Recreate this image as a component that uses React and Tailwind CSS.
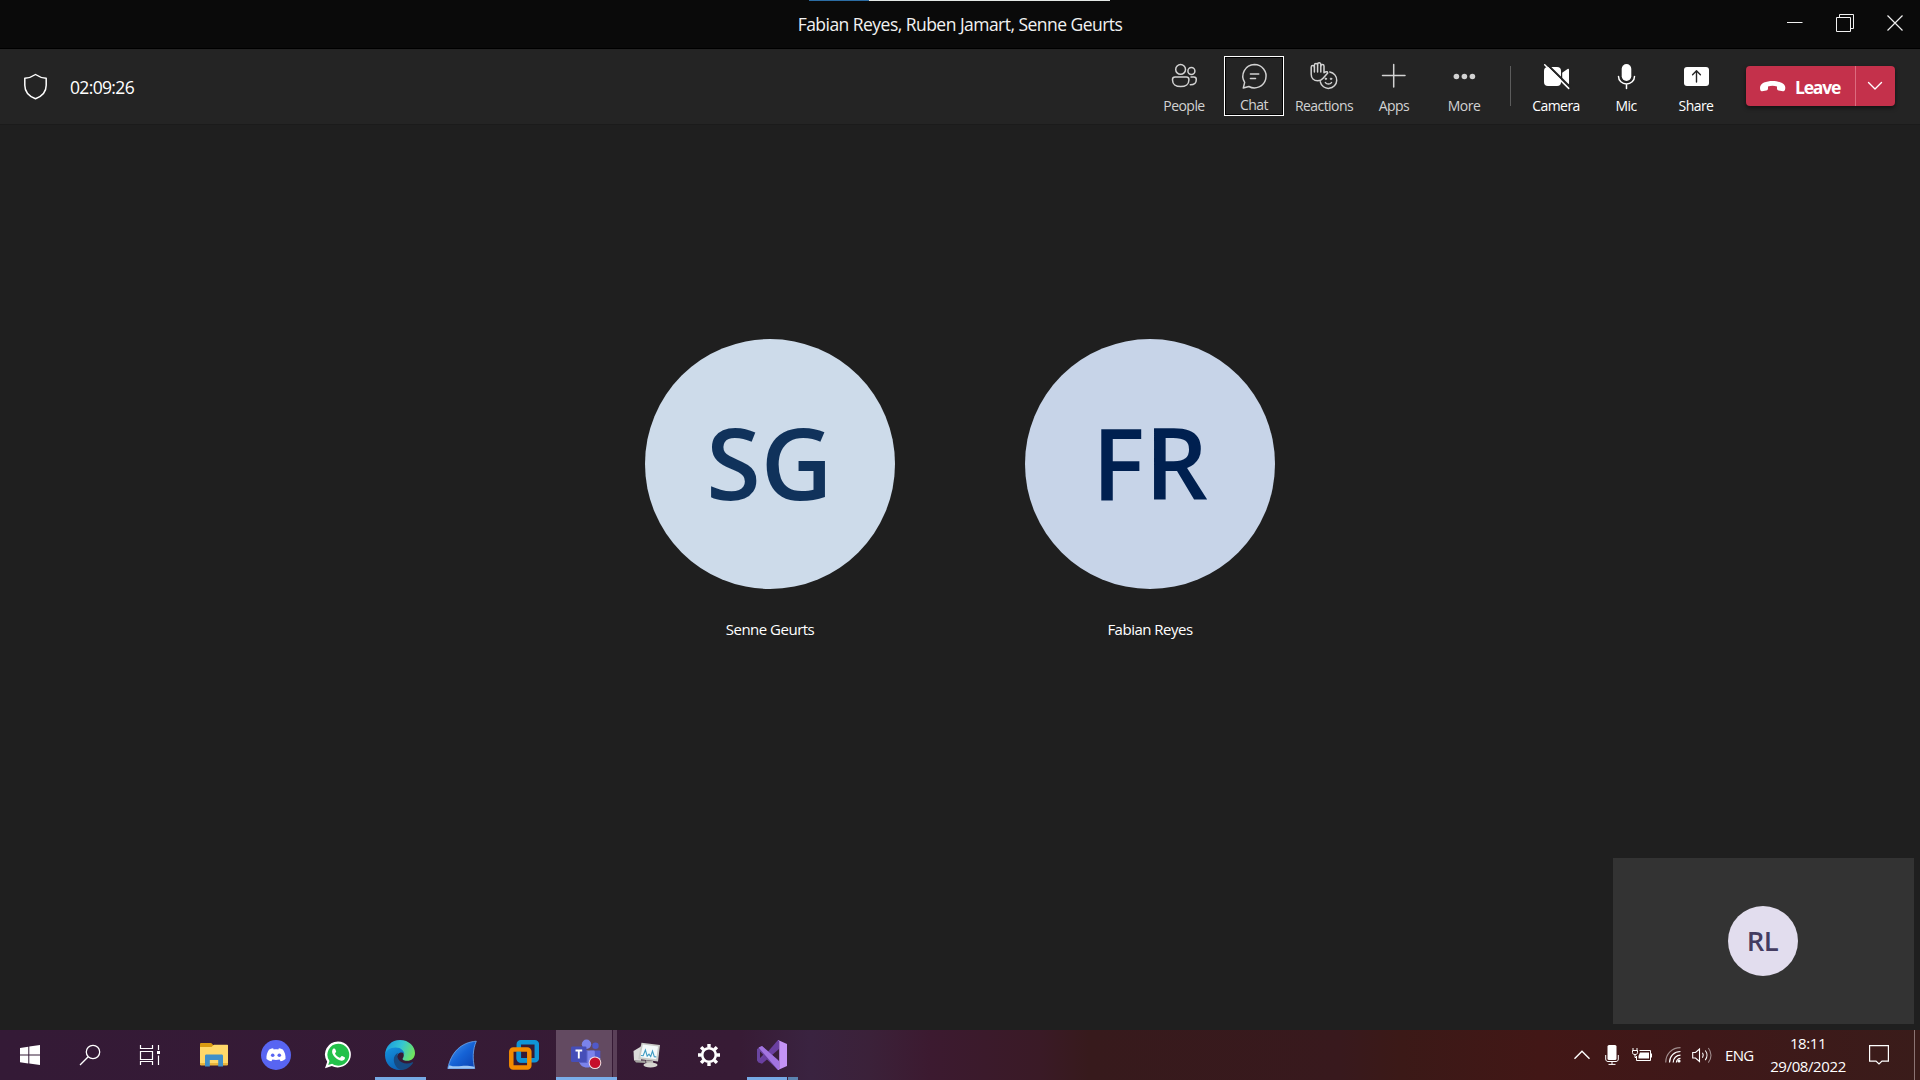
import React from "react";

const Glyph = ({ children, className = "" }) => (
  <svg
    width="40"
    height="36"
    viewBox="0 0 40 36"
    fill="none"
    stroke="currentColor"
    strokeWidth="1.5"
    strokeLinecap="round"
    strokeLinejoin="round"
    className={className}
  >
    {children}
  </svg>
);

const PeopleIcon = () => (
  <Glyph>
    <circle cx="16.6" cy="9.4" r="4.9" />
    <circle cx="27.4" cy="11" r="3.5" />
    <path d="M11 16.9h11.4a2.5 2.5 0 0 1 2.5 2.5v.6c0 4-3.3 6.6-8.2 6.6s-8.2-2.6-8.2-6.6v-.6a2.5 2.5 0 0 1 2.5-2.5z" />
    <path d="M27 16.9h2.8a2.5 2.5 0 0 1 2.5 2.5c0 3.5-2.3 5.4-6 5.4" />
  </Glyph>
);

const ChatIcon = () => (
  <Glyph>
    <path d="M20.4 4.7a12 12 0 1 1-5.7 22.56l-5.7 1.5 1.4-5.7A12 12 0 0 1 20.4 4.7z" />
    <path d="M16.3 14.3h8.6M16.3 19h5.3" />
  </Glyph>
);

const ReactionsIcon = () => (
  <Glyph>
    <path d="M7.200 7.200a1.600 1.600 0 0 1 3.200 0V5a1.600 1.600 0 0 1 3.200 0V4.300a1.600 1.600 0 0 1 3.200 0V6a1.600 1.600 0 0 1 3.200 0v6.800c1-.9 2.200-1.400 3.200-1l.5 1.200-4.600 5.200c-1.400 1.700-3.200 2.500-5.400 2.500-3.900 0-6.500-2.600-6.500-6.500z" />
    <path d="M10.400 7v5M13.600 5v7M16.800 5.500v6.500" />
    <path d="M25.800 11.900a8.300 8.300 0 1 1-9.500 9.900" />
    <path d="M21.400 22.600c1.500 2 4.600 2 6.100 0" />
    <circle cx="21.800" cy="18.800" r=".8" fill="currentColor" strokeWidth=".8" />
    <circle cx="27" cy="18.800" r=".8" fill="currentColor" strokeWidth=".8" />
  </Glyph>
);

const AppsIcon = () => (
  <Glyph>
    <path d="M19.700 4.500v22.500M8.500 15.600h22.500" />
  </Glyph>
);

const MoreIcon = () => (
  <Glyph>
    <g fill="currentColor" stroke="none">
      <circle cx="12.400" cy="16.500" r="2.800" />
      <circle cx="20.400" cy="16.500" r="2.800" />
      <circle cx="28.400" cy="16.500" r="2.800" />
    </g>
  </Glyph>
);

const CameraIcon = () => (
  <Glyph>
    <g fill="currentColor" stroke="none">
      <rect x="8" y="7" width="17" height="19" rx="4" />
      <path d="M26.200 12.800l5.400-3.800c.8-.5 1.400-.2 1.400.7v13.600c0 .9-.6 1.200-1.400.7l-5.400-3.800z" />
    </g>
    <path d="M10.500 3.700l24 23.800" stroke="#242424" strokeWidth="2.200" />
    <path d="M8.700 4.800l24 23.600" strokeWidth="1.500" />
  </Glyph>
);

const MicIcon = () => (
  <Glyph>
    <rect x="15.700" y="4" width="9.600" height="17" rx="4.800" fill="currentColor" stroke="none" />
    <path d="M12.500 16.500a8 7.500 0 0 0 16 0M20.500 24.200v4.200" />
  </Glyph>
);

const ShareIcon = () => (
  <Glyph>
    <rect x="8" y="7" width="25" height="19" rx="3" fill="currentColor" stroke="none" />
    <path d="M20.500 22V11M16.600 14.700l3.900-3.900 3.900 3.900" stroke="#242424" strokeWidth="1.400" />
  </Glyph>
);

const ToolButton = ({ label, icon: Icon, active, bright }) => (
  <button
    className={`flex h-[60px] w-[60px] shrink-0 flex-col items-center ${
      active ? "border border-white pt-[3px] outline outline-1 -outline-offset-2 outline-black" : "pt-1"
    } ${bright ? "text-white" : "text-[#d2d2d2]"}`}
  >
    <Icon />
    <span className="whitespace-nowrap text-[14px] leading-5 tracking-[-0.55px]">{label}</span>
  </button>
);

const TitleBar = () => (
  <header className="relative grid h-[49px] grid-cols-[1fr_auto_1fr] items-center border-b border-black bg-[#0a0a0a]">
    <div className="absolute left-[809px] top-0 flex h-px w-[301px]">
      <div className="w-[60px] bg-[#2b6ca3]" />
      <div className="flex-1 bg-[#e4e8e6]" />
    </div>
    <div />
    <h1 className="pt-px text-[17.5px] tracking-[-0.53px] text-[#f2f2f2]">Fabian Reyes, Ruben Jamart, Senne Geurts</h1>
    <div className="flex h-full justify-end text-[#f0f0f0]">
      <button className="flex w-[50px] justify-center pt-[14px]">
        <svg width="18" height="18" fill="none" stroke="currentColor"><path d="M1 8.500h15.500" /></svg>
      </button>
      <button className="flex w-[50px] justify-center pt-[14px]">
        <svg width="18" height="18" fill="none" stroke="currentColor"><path d="M.5 3.500h14v14H.5zM3.500 3V.5h14v14H15" /></svg>
      </button>
      <button className="flex w-[50px] justify-center pt-[14px]">
        <svg width="18" height="18" fill="none" stroke="currentColor" strokeWidth="1.200"><path d="M1.500 1.500l15 15M16.500 1.500l-15 15" /></svg>
      </button>
    </div>
  </header>
);

const CallBar = () => (
  <div className="flex h-[76px] items-start border-b border-[#1b1b1b] bg-[#242424] pt-[7px]">
    <div className="flex h-[60px] items-center pl-[23px] text-white">
      <svg width="25" height="27" viewBox="0 0 25 27" fill="none" stroke="currentColor" strokeWidth="1.500" strokeLinejoin="round">
        <path d="M12.500 1.500c3.300 2.300 6.700 3.500 10.700 3.700v7c0 7-3.700 10.900-10.700 13.500C5.500 23.100 1.800 19.200 1.800 12.200v-7c4-.2 7.400-1.400 10.700-3.700z" />
      </svg>
      <span className="ml-[22px] mt-0.5 text-[17.5px] tracking-[-0.65px]">02:09:26</span>
    </div>
    <div className="ml-auto flex items-start gap-[10px]">
      <ToolButton label="People" icon={PeopleIcon} />
      <ToolButton label="Chat" icon={ChatIcon} active />
      <ToolButton label="Reactions" icon={ReactionsIcon} />
      <ToolButton label="Apps" icon={AppsIcon} />
      <ToolButton label="More" icon={MoreIcon} />
    </div>
    <div className="ml-4 mt-[10px] h-10 w-px bg-[#5c5c5c]" />
    <div className="ml-[15px] flex items-start gap-[10px]">
      <ToolButton label="Camera" icon={CameraIcon} bright />
      <ToolButton label="Mic" icon={MicIcon} bright />
      <ToolButton label="Share" icon={ShareIcon} bright />
    </div>
    <div className="ml-5 mr-[25px] mt-[10px] flex h-10 w-[149px] overflow-hidden rounded-[4px] bg-[#c4314b] text-white shadow-[0_2px_4px_rgba(0,0,0,0.5)]">
      <button className="flex flex-1 items-center border-r border-[#dc6b7e] pl-[14px]">
        <svg width="26" height="12" viewBox="0 0 26 12" fill="currentColor">
          <path d="M12.500 1C18.500 1 25.300 3 25.300 7.800c0 2.400-.9 3.700-2.400 3.400l-4.200-.8c-1.300-.3-1.700-1-1.700-2.200V6.600c-2.700-1-6.300-1-9 0v1.600c0 1.200-.4 1.900-1.700 2.200l-4.200.8C.7 11.500 0 10.200 0 7.800 0 3 6.500 1 12.500 1z" />
        </svg>
        <span className="ml-[9px] mt-[3px] text-[17.5px] font-bold tracking-[-1.2px]">Leave</span>
      </button>
      <button className="flex w-[39px] items-center justify-center pr-0.5">
        <svg width="16" height="10" fill="none" stroke="currentColor" strokeWidth="1.400" strokeLinecap="round" strokeLinejoin="round">
          <path d="M1.500 1.500L8 8l6.500-6.500" />
        </svg>
      </button>
    </div>
  </div>
);

const Participant = ({ initials, name, colors }) => (
  <div className="flex w-[250px] flex-col items-center">
    <div className={`flex h-[250px] w-[250px] items-center justify-center rounded-full pb-[5px] ${colors}`}>
      <span className="text-[99px] font-semibold leading-none">{initials}</span>
    </div>
    <span className="mt-[30px] text-[15px] leading-5 tracking-[-0.5px] text-white">{name}</span>
  </div>
);

const Stage = () => (
  <main className="relative flex flex-1 items-start justify-center gap-[130px] bg-[#1f1f1f] pt-[214px]">
    <Participant initials="SG" name="Senne Geurts" colors="bg-[#cddbea] pr-px text-[#10325b]" />
    <Participant initials="FR" name="Fabian Reyes" colors="bg-[#c7d4e8] text-[#002050]" />
    <div className="absolute bottom-[6px] right-[6px] flex h-[166px] w-[301px] items-center justify-center bg-[#333333] pr-0.5">
      <div className="flex h-[70px] w-[70px] items-center justify-center rounded-full bg-[#e2ddee] text-[27.5px] font-semibold tracking-[-0.5px] text-[#443c61]">
        RL
      </div>
    </div>
  </main>
);

const WindowsLogo = () => (
  <svg width="20" height="20" fill="#fff">
    <path d="M0 2.900L8.300 1.700v7.800H0zM9.300 1.500L20 0v9.500H9.300zM0 10.500h8.300v7.900L0 17.200zM9.300 10.500H20V20L9.300 18.500z" />
  </svg>
);

const SearchIcon = () => (
  <svg width="22" height="22" fill="none" stroke="#fff" strokeWidth="1.300">
    <circle cx="14" cy="8" r="6.700" />
    <path d="M9.200 12.800L1 21" />
  </svg>
);

const TaskViewIcon = () => (
  <svg width="22" height="20" fill="none" stroke="#fff" strokeWidth="1.200">
    <path d="M1.500 0v3.500h12V0M1.500 20v-3.500h12V20M1.500 6.500h12v8h-12zM19.500 0v5M19.500 10.500V20" />
    <rect x="18" y="6" width="3" height="3" fill="#fff" stroke="none" />
  </svg>
);

const ExplorerIcon = () => (
  <svg width="28" height="24" viewBox="0 0 28 24">
    <path d="M0 1.200C0 .5.500 0 1.200 0h10l2 2H28v6H0z" fill="#d99a11" />
    <path d="M0 4h11.500l2.500-2.300h13c.600 0 1 .4 1 1V22H0z" fill="#ffd869" />
    <path d="M0 20h28v1.500c0 .5-.5.900-1 .900H1c-.6 0-1-.4-1-.900z" fill="#e9b53c" />
    <path d="M5 23.500V13c0-.8.6-1.400 1.400-1.400h15.200c.8 0 1.400.6 1.400 1.400v10.500h-4.800V17H9.800v6.500z" fill="#3f8fc9" />
  </svg>
);

const DiscordIcon = () => (
  <svg width="30" height="30" viewBox="0 0 30 30">
    <circle cx="15" cy="15" r="15" fill="#5865f2" />
    <path d="M12.100 8.300c-1.700.3-2.800.7-4 1.300C6.100 12.500 5.200 15.600 5.500 19c1.500 1.200 3.100 1.900 4.900 2.300l1-1.700c2.300.6 4.900.6 7.200 0l1 1.700c1.800-.4 3.400-1.100 4.900-2.300.3-3.400-.6-6.500-2.600-9.400-1.200-.6-2.300-1-4-1.300l-.6 1.100c-1.500-.2-3.100-.2-4.600 0z" fill="#fff" />
    <circle cx="11.700" cy="15.200" r="1.800" fill="#5865f2" />
    <circle cx="18.300" cy="15.200" r="1.800" fill="#5865f2" />
  </svg>
);

const WhatsAppIcon = () => (
  <svg width="28" height="28" viewBox="0 0 28 28">
    <path d="M14 .5A13 13 0 1 1 7.800 25L1 27.200l2.200-6.500A13 13 0 0 1 14 .5z" fill="#fff" />
    <path d="M14.200 2.700a11 11 0 1 1-6.100 20.100L4.200 24l1.300-3.900A11 11 0 0 1 14.200 2.700z" fill="#23c14b" />
    <path d="M9.600 7.600c.5-.3 1.300-.3 1.600.4l.9 2.200c.2.500-.1 1-.9 1.900-.2.300-.2.500 0 .8 1.100 1.800 2.500 3 4.400 3.800.3.100.5.100.7-.1l1.100-1.400c.2-.3.5-.3.800-.2l2.400 1.200c.4.200.5.400.4.900-.3 1.900-1.900 2.700-3.500 2.600-4.800-.6-9.300-5.200-9.400-8.900 0-1.400.5-2.500 1.500-3.200z" fill="#fff" />
  </svg>
);

const EdgeIcon = () => (
  <svg width="30" height="30" viewBox="0 0 30 30">
    <defs>
      <linearGradient id="edgeTop" x1="0" y1=".3" x2="1" y2=".6">
        <stop offset="0" stopColor="#1a9be0" />
        <stop offset=".5" stopColor="#35c6d2" />
        <stop offset="1" stopColor="#72e55a" />
      </linearGradient>
      <linearGradient id="edgeSide" x1="0" y1="0" x2=".5" y2="1">
        <stop offset="0" stopColor="#1493df" />
        <stop offset="1" stopColor="#0c62b5" />
      </linearGradient>
    </defs>
    <path d="M0 15C.5 6 6.500 0 15 0c9 0 15 6.500 15 13 0 5-3.500 7.800-8 7.800-3.500 0-5-1.300-4.200-2.500 2.600-3.400.2-9.800-6.300-9.800C6 8.500 1.500 11 0 15z" fill="url(#edgeTop)" />
    <path d="M0 15c.5-4.500 5-7.500 10.500-7.500 6 0 8.500 3.500 8.800 6.500-2-3-7.300-1.500-7.300 3.500 0 6 5 10 10 9.500-2 1.800-4.500 3-7.500 3C6 30 0 23.500 0 15z" fill="url(#edgeSide)" />
    <path d="M13 12.800c-2.600 1.200-4.500 4-4.200 7.700.4 4.700 3.700 8.700 7.200 9.500 5 0 9.500-2.800 12-7 .4-.7-.2-1-.8-.7-5 2.500-11.600 1-14-3.300-1.200-2.200-1.200-4.500-.2-6.200z" fill="#164b83" />
  </svg>
);

const WiresharkIcon = () => (
  <svg width="30" height="30" viewBox="0 0 30 30">
    <defs>
      <linearGradient id="fin" x1="0" y1="0" x2="1" y2="1">
        <stop offset="0" stopColor="#4f9cf0" />
        <stop offset=".5" stopColor="#1563d6" />
        <stop offset="1" stopColor="#0b3fae" />
      </linearGradient>
    </defs>
    <path d="M.8 28.500C4 12.500 14 2.200 29.300 1.200c-3.600 8.300-3.900 17.800-1.600 27.300z" fill="url(#fin)" stroke="#6faaf0" strokeWidth=".8" />
    <path d="M1 28.500l1.200-3.300c4 1.300 7.700 1.400 12.200.8 4.500-.5 8-.2 12.800.8l.5 1.700z" fill="#9cc6f5" />
  </svg>
);

const VmwareIcon = () => (
  <svg width="30" height="30" viewBox="0 0 30 30" fill="none" strokeWidth="4.500">
    <rect x="9.800" y="2.300" width="18" height="18" rx="2" stroke="#0f95d6" />
    <rect x="2.300" y="9.500" width="18" height="18" rx="2" stroke="#f38b00" />
    <path d="M9.800 11.800v6.700c0 1.100.9 1.900 2 1.900h6.200" stroke="#0f95d6" />
  </svg>
);

const TeamsIcon = () => (
  <svg width="32" height="32" viewBox="0 0 32 32">
    <circle cx="25.500" cy="6.700" r="3.200" fill="#5059c9" />
    <path d="M20 11.500h9.500c.5 0 .8.300.8.800V19c0 3-2.500 5-5.300 5S20 22 20 19z" fill="#5059c9" />
    <circle cx="16.500" cy="5.300" r="4.700" fill="#7b83eb" />
    <path d="M10 11.500h13.500c.8 0 1.300.5 1.300 1.300V21c0 5-3.500 7.500-7.700 7.500S9 26 9 21z" fill="#7b83eb" />
    <path d="M9 11.500h8.500V24H9.500z" fill="#5a62c8" />
    <rect x="1" y="7.500" width="15.500" height="15.500" rx="1.300" fill="#464eb8" />
    <path d="M5.500 11.500h6.700M8.800 11.500v8" stroke="#fff" strokeWidth="1.900" />
    <circle cx="25" cy="23.700" r="6.300" fill="#f1dfe2" />
    <circle cx="25" cy="23.700" r="5.300" fill="#c50f2b" />
  </svg>
);

const TaskManagerIcon = () => (
  <svg width="30" height="26" viewBox="0 0 30 26">
    <path d="M1.500 9L9 4.500v14.500L2 18.500z" fill="#dadbd9" />
    <path d="M2.500 18.500h11v2.500l-9.500-.5z" fill="#a4a49f" />
    <path d="M9.500.8L28 3 26 19.500 6.200 17z" fill="#c9cbc7" />
    <path d="M10.800 2.500L26 4.400 24.200 17.300 8.500 15.200z" fill="#f4fafb" />
    <path d="M9 13.500l2.200.2 2.200-5.700 1.800 6.200 1.800-2 1.700 2.300 1.800-5.500 1.800 5.700 2 .2" fill="none" stroke="#3f9cc4" strokeWidth="1.100" />
    <path d="M14 18.300l7 .8.300 2h-7z" fill="#b5b5ae" />
    <ellipse cx="18.500" cy="23" rx="7" ry="2.600" fill="#d6d6d0" />
  </svg>
);

const SettingsIcon = () => (
  <svg width="22" height="22" viewBox="-11 -11 22 22" fill="none" stroke="#fff">
    <circle r="6.800" strokeWidth="2.600" />
    <path
      strokeWidth="3.400"
      d="M0-7.500V-11M0 7.500V11M-7.500 0H-11M7.500 0H11M-5.300-5.300L-7.900-7.900M5.300 5.300L7.900 7.900M-5.300 5.300L-7.900 7.900M5.300-5.300L7.900-7.900"
    />
  </svg>
);

const VisualStudioIcon = () => (
  <svg width="30" height="30" viewBox="0 0 30 30">
    <path fillRule="evenodd" d="M0 9l5-3L21 20v10L8.500 18 5 21l-3.500 1.500L0 20.500zM3 11.500v6.500l3.300-3.200z" fill="#6a45a0" />
    <path d="M1.500 22.500L5 23.800 22 9V0h-1z" fill="#6a3fa0" />
    <path d="M1.500 7.500L5 6l17 15v9h-1z" fill="#a274e0" />
    <path d="M21 0l9 4v22l-9 4 1.200-1.500v-27z" fill="#c393f5" />
  </svg>
);

const AppButton = ({ children }) => (
  <button className="relative flex h-full w-[62px] shrink-0 items-center justify-center">{children}</button>
);

const Tray = () => (
  <div className="ml-auto flex h-full items-center text-white">
    <svg width="18" height="10" fill="none" stroke="currentColor" strokeWidth="1.400">
      <path d="M1.500 8.800L9 1.300l7.500 7.500" />
    </svg>
    <svg width="14" height="20" className="ml-[14px]" fill="none" stroke="currentColor">
      <rect x="2.500" y="0" width="9" height="15" rx="1.500" fill="currentColor" stroke="none" />
      <path d="M.7 10v4c0 1.700 1 2.500 2.300 2.500h8c1.300 0 2.300-.8 2.300-2.500v-4M7 16.500v3M3.500 19.400h7" />
    </svg>
    <svg width="21" height="14" className="ml-[13px]" fill="none" stroke="currentColor">
      <path d="M7.500 2.500h11v10h-14V8" />
      <path d="M8 4.500h9v6H6.500V8z" fill="currentColor" stroke="none" />
      <path d="M19.500 5.500v4M1 0v2.500M5 0v2.500M.5 2.500h5v2c0 1.500-1 2-2.500 2s-2.500-.5-2.500-2zM3 6.500v3h2" />
    </svg>
    <svg width="16" height="16" className="ml-[12px]" fill="none" stroke="currentColor" strokeWidth="1.200">
      <path d="M.7 15.500C.7 7 7 .7 15.500.7" opacity=".5" />
      <path d="M4.500 15.500c0-6.300 4.700-11 11-11M8.200 15.500c0-4.200 3.100-7.300 7.300-7.300M11.400 15.500c0-2.300 1.800-4.100 4.100-4.100" />
      <circle cx="14" cy="14" r="1.600" fill="currentColor" stroke="none" />
    </svg>
    <svg width="21" height="18" className="ml-[11px]" fill="none" stroke="currentColor" strokeWidth="1.100">
      <path d="M.7 6.500h2.800L7.500 3v12.500L3.500 12H.7z" />
      <path d="M10.500 6.800c1 1.500 1 3.500 0 5M13.300 4.500c2.200 2.800 2.200 6.800 0 9.600" />
      <path d="M16.300 2c3.600 4.200 3.600 10.400 0 14.600" opacity=".5" />
    </svg>
    <span className="ml-[12px] w-[30px] whitespace-nowrap text-[15px] tracking-[-0.7px]">ENG</span>
    <div className="mb-px ml-[12px] flex w-[82px] flex-col items-center text-[15px] leading-[23px] tracking-[-0.4px]">
      <span>18:11</span>
      <span>29/08/2022</span>
    </div>
    <svg width="20" height="20" className="ml-[20px]" fill="none" stroke="currentColor" strokeWidth="1.200">
      <path d="M.6.600h18.800v15.500h-6.400L10 19l-3-2.900H.6z" />
    </svg>
    <div className="ml-[25px] h-full w-[6px] border-l border-[#8c7474]" />
  </div>
);

const Taskbar = () => (
  <footer className="flex h-[50px] items-center bg-[linear-gradient(90deg,#341a36_0px,#371b35_740px,#3a2340_810px,#3b2139_870px,#3c1a30_930px,#3a1a26_1040px,#371a1c_1090px,#38191d_1340px,#3b1917_1400px,#421716_1540px,#3f1819_1700px,#3a1c1a_1920px)]">
    <button className="flex w-[60px] justify-center"><WindowsLogo /></button>
    <button className="flex w-[60px] justify-center"><SearchIcon /></button>
    <button className="mr-[3px] flex w-[60px] justify-center"><TaskViewIcon /></button>
    <AppButton><ExplorerIcon /></AppButton>
    <AppButton><DiscordIcon /></AppButton>
    <AppButton><WhatsAppIcon /></AppButton>
    <AppButton>
      <EdgeIcon />
      <span className="absolute bottom-0 left-[6px] h-[3px] w-[51px] bg-[#76a9e4]" />
    </AppButton>
    <AppButton><WiresharkIcon /></AppButton>
    <AppButton><VmwareIcon /></AppButton>
    <AppButton>
      <span className="absolute inset-y-0 left-px w-[56px] bg-[#634a61]" />
      <span className="absolute inset-y-0 right-0 w-[4px] bg-[#5a4058]" />
      <span className="absolute bottom-0 left-px h-[3px] w-[61px] bg-[#7aaeea]" />
      <span className="relative"><TeamsIcon /></span>
    </AppButton>
    <AppButton><span className="pr-0.5"><TaskManagerIcon /></span></AppButton>
    <AppButton><span className="pr-0.5"><SettingsIcon /></span></AppButton>
    <AppButton>
      <VisualStudioIcon />
      <span className="absolute bottom-0 left-[6px] h-[3px] w-[40px] bg-[#76a9e4]" />
      <span className="absolute bottom-0 left-[47px] h-[3px] w-[10px] bg-[#5b83b0]" />
    </AppButton>
    <Tray />
  </footer>
);

export default function App() {
  return (
    <div className="flex h-screen w-screen flex-col overflow-hidden bg-[#1f1f1f] font-['Open_Sans','Noto_Sans',sans-serif]">
      <TitleBar />
      <CallBar />
      <Stage />
      <Taskbar />
    </div>
  );
}
